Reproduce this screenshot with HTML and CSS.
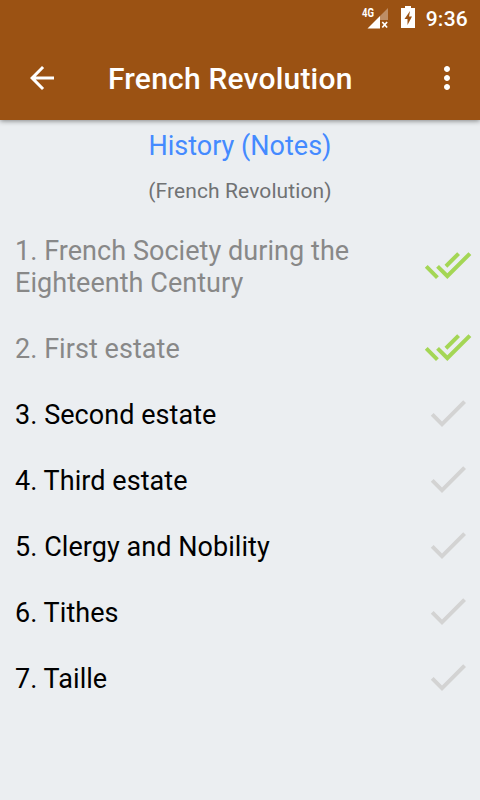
FILE: index.html
```html
<!DOCTYPE html>
<html lang="en">
<head>
    <meta charset="UTF-8">
    <meta name="viewport" content="width=device-width, initial-scale=1.0">
    <title>French Revolution</title>
    <link rel="stylesheet" href="styles.css">
</head>
<body>

    <!-- Icons shared by the list rows -->
    <svg class="icon-defs" width="0" height="0">
        <symbol id="done" viewBox="0 0 24 24">
            <path d="M9 16.2L4.8 12l-1.4 1.4L9 19 21 7l-1.4-1.4L9 16.2z"/>
        </symbol>
        <symbol id="doneAll" viewBox="0 0 24 24">
            <path d="M18 7l-1.41-1.41-6.34 6.34 1.41 1.41L18 7zm4.24-1.41L11.66 16.17 7.48 12l-1.41 1.41L11.66 19l12-12-1.42-1.41zM.41 13.41L6 19l1.41-1.41L1.83 12 .41 13.41z"/>
        </symbol>
    </svg>

    <!-- Header Section -->
    <div class="header">
        <div class="status-bar">
            <svg class="signal" width="28" height="24" viewBox="0 0 28 24">
                <path d="M27 2v12h-8v-4z" fill="#fff" fill-opacity="0.35"/>
                <path d="M19 10v12.5H6.5z" fill="#fff"/>
                <path d="M21.3 16l4.800 5.5m0-5.5l-4.800 5.5" stroke="#fff" stroke-width="1.7"/>
                <text x="1" y="11" class="network" textLength="12" lengthAdjust="spacingAndGlyphs">4G</text>
            </svg>
            <svg class="battery" width="14" height="22" viewBox="0 0 14 22">
                <path d="M4 0h6v2h4v20H0V2h4z" fill="#fff"/>
                <path d="M9 5L3.5 13H6.5V19L11 10.5H8z" fill="#9b5213"/>
            </svg>
            <span class="clock">9:36</span>
        </div>
        <div class="toolbar">
            <svg class="back" width="36" height="36" viewBox="0 0 24 24">
                <path d="M20 11H7.83l5.59-5.59L12 4l-8 8 8 8 1.41-1.41L7.83 13H20v-2z"/>
            </svg>
            <h1>French Revolution</h1>
            <svg class="menu" width="36" height="36" viewBox="0 0 24 24">
                <path d="M12 8c1.1 0 2-.9 2-2s-.9-2-2-2-2 .9-2 2 .9 2 2 2zm0 2c-1.1 0-2 .9-2 2s.9 2 2 2 2-.9 2-2-.9-2-2-2zm0 6c-1.1 0-2 .9-2 2s.9 2 2 2 2-.9 2-2-.9-2-2-2z"/>
            </svg>
        </div>
    </div>

    <!-- Subject Section -->
    <div class="subject">
        <h2>History (Notes)</h2>
        <p>(French Revolution)</p>
    </div>

    <!-- Topic List -->
    <div class="topic-list">
        <div class="topic read">
            <span>1. French Society during the Eighteenth Century</span>
            <svg class="check"><use href="#doneAll"/></svg>
        </div>
        <div class="topic read">
            <span>2. First estate</span>
            <svg class="check"><use href="#doneAll"/></svg>
        </div>
        <div class="topic">
            <span>3. Second estate</span>
            <svg class="check"><use href="#done"/></svg>
        </div>
        <div class="topic">
            <span>4. Third estate</span>
            <svg class="check"><use href="#done"/></svg>
        </div>
        <div class="topic">
            <span>5. Clergy and Nobility</span>
            <svg class="check"><use href="#done"/></svg>
        </div>
        <div class="topic">
            <span>6. Tithes</span>
            <svg class="check"><use href="#done"/></svg>
        </div>
        <div class="topic">
            <span>7. Taille</span>
            <svg class="check"><use href="#done"/></svg>
        </div>
    </div>

</body>
</html>
```

FILE: styles.css
```css
* {
    box-sizing: border-box;
}
body {
    font-family: Roboto, sans-serif;
    margin: 0;
    padding: 0;
    min-height: 100vh;
    background-color: #ebeef1;
}
.icon-defs {
    display: none;
}

/* Header Styles */
.header {
    height: 120px;
    background-color: #9b5213;
    color: white;
    box-shadow: 0 1px 5px rgba(0, 0, 0, 0.45);
}
.status-bar {
    height: 36px;
    display: flex;
    align-items: center;
    justify-content: flex-end;
    padding-right: 12px;
}
.signal {
    margin-right: 12px;
}
.network {
    font-size: 12px;
    font-weight: bold;
    fill: #fff;
}
.battery {
    margin: -2px 11px 0 0;
}
.clock {
    font-size: 21px;
    font-weight: 500;
    line-height: 24px;
    letter-spacing: 0.25px;
    padding-top: 2px;
}
.toolbar {
    height: 84px;
    display: flex;
    align-items: center;
    padding: 0 15px 0 24px;
}
.toolbar h1 {
    flex: 1;
    margin: 0 0 0 48px;
    padding-top: 2px;
    font-size: 30px;
    font-weight: 500;
    line-height: 36px;
    letter-spacing: 0.2px;
}
.back,
.menu {
    fill: #fff;
}

/* Subject Styles */
.subject {
    height: 96px;
    padding-top: 10px;
    text-align: center;
}
.subject h2 {
    margin: 0;
    color: #448aff;
    font-size: 27px;
    font-weight: 400;
    line-height: 32px;
}
.subject p {
    margin: 17px 0 0;
    color: #707274;
    font-size: 21px;
    line-height: 25px;
    letter-spacing: 0.1px;
}

/* Topic Styles */
.topic {
    display: flex;
    align-items: center;
    justify-content: space-between;
    min-height: 66px;
    padding: 17px 8px 17px 15px;
    color: #000;
    font-size: 27px;
    line-height: 32px;
    letter-spacing: 0.05px;
}
.topic span {
    width: 380px;
    padding-top: 2px;
    margin-bottom: -2px;
}
.check {
    width: 48px;
    height: 48px;
    margin: -9px 0;
    flex-shrink: 0;
    fill: #d3d3d3;
}
.read {
    color: #888;
}
.read .check {
    fill: #a4d655;
}
```
